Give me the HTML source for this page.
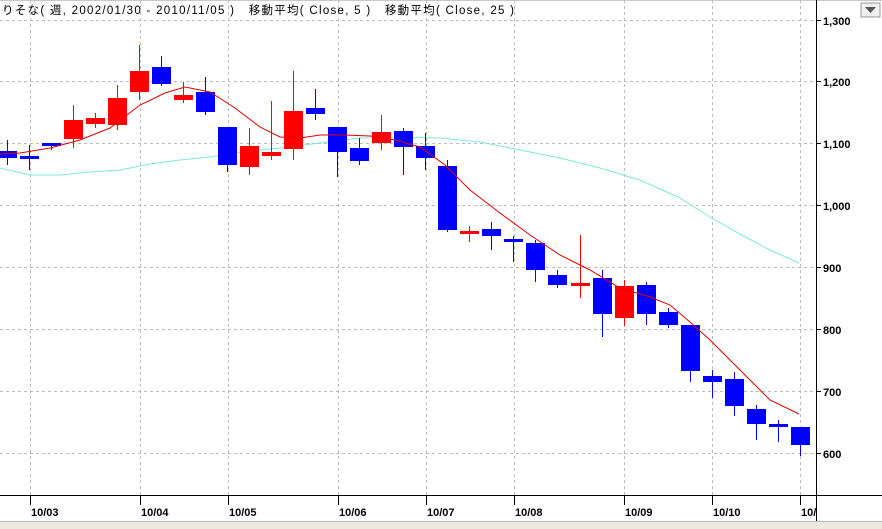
<!DOCTYPE html>
<html><head><meta charset="utf-8"><style>
html,body{margin:0;padding:0;background:#fff;width:882px;height:529px;overflow:hidden}
svg text{font-family:"Liberation Sans","Noto Sans CJK JP",sans-serif}
</style></head><body>
<svg width="882" height="529" xmlns="http://www.w3.org/2000/svg">
<rect width="882" height="529" fill="#fff"/>
<line x1="0" y1="0.5" x2="882" y2="0.5" stroke="#c8c8c8"/>
<g stroke="#bbb" stroke-dasharray="3,3" stroke-width="1">
<line x1="0" y1="20.5" x2="816" y2="20.5"/><line x1="0" y1="81.5" x2="816" y2="81.5"/>
<line x1="0" y1="143.5" x2="816" y2="143.5"/><line x1="0" y1="205.5" x2="816" y2="205.5"/>
<line x1="0" y1="267.5" x2="816" y2="267.5"/><line x1="0" y1="329.5" x2="816" y2="329.5"/>
<line x1="0" y1="391.5" x2="816" y2="391.5"/><line x1="0" y1="453.5" x2="816" y2="453.5"/>
<line x1="30.5" y1="0" x2="30.5" y2="495"/><line x1="140.5" y1="0" x2="140.5" y2="495"/>
<line x1="228.5" y1="0" x2="228.5" y2="495"/><line x1="338.5" y1="0" x2="338.5" y2="495"/>
<line x1="426.5" y1="0" x2="426.5" y2="495"/><line x1="514.5" y1="0" x2="514.5" y2="495"/>
<line x1="624.5" y1="0" x2="624.5" y2="495"/><line x1="712.5" y1="0" x2="712.5" y2="495"/>
<line x1="800.5" y1="0" x2="800.5" y2="495"/>
</g>
<polyline fill="none" stroke="#7fe8d8" stroke-width="1" points="0,168 30,175 60,175 90,172 120,170 150,164 180,160 210,157 240,152 280,148 320,143 360,138 400,137 440,138 480,142 520,150 560,158 600,168 640,180 680,198 710,217 740,234 770,250 799,263"/>
<g id="c"></g>
<polyline fill="none" stroke="#e00000" stroke-width="1" points="0,154 20,153 50,148 80,140 110,128 140,105 165,93 185,87 210,92 235,108 260,127 280,137 300,138 320,135 345,135 370,136 395,140 420,147 445,165 470,190 500,213 530,235 560,255 590,270 620,288 650,297 670,305 690,322 710,340 730,360 750,380 770,400 799,414"/>
<line x1="816.5" y1="0" x2="816.5" y2="529" stroke="#000"/>
<line x1="0" y1="495.5" x2="882" y2="495.5" stroke="#000"/>
<g stroke="#000">
<line x1="816" y1="20.5" x2="821" y2="20.5"/><line x1="816" y1="81.5" x2="821" y2="81.5"/>
<line x1="816" y1="143.5" x2="821" y2="143.5"/><line x1="816" y1="205.5" x2="821" y2="205.5"/>
<line x1="816" y1="267.5" x2="821" y2="267.5"/><line x1="816" y1="329.5" x2="821" y2="329.5"/>
<line x1="816" y1="391.5" x2="821" y2="391.5"/><line x1="816" y1="453.5" x2="821" y2="453.5"/>
<line x1="30.5" y1="495" x2="30.5" y2="505"/><line x1="140.5" y1="495" x2="140.5" y2="505"/>
<line x1="228.5" y1="495" x2="228.5" y2="505"/><line x1="338.5" y1="495" x2="338.5" y2="505"/>
<line x1="426.5" y1="495" x2="426.5" y2="505"/><line x1="514.5" y1="495" x2="514.5" y2="505"/>
<line x1="624.5" y1="495" x2="624.5" y2="505"/><line x1="712.5" y1="495" x2="712.5" y2="505"/>
<line x1="800.5" y1="495" x2="800.5" y2="505"/>
</g>
<g font-size="11" font-weight="bold" fill="#000">
<text x="823" y="25">1,300</text><text x="823" y="86">1,200</text><text x="823" y="148">1,100</text>
<text x="823" y="210">1,000</text><text x="823" y="272">900</text><text x="823" y="334">800</text>
<text x="823" y="396">700</text><text x="823" y="458">600</text>
<text x="31" y="516">10/03</text><text x="141" y="516">10/04</text><text x="229" y="516">10/05</text>
<text x="339" y="516">10/06</text><text x="427" y="516">10/07</text><text x="515" y="516">10/08</text>
<text x="625" y="516">10/09</text><text x="713" y="516">10/10</text><text x="801" y="516">10/</text>
</g>
<text x="2" y="14" font-size="11.5" fill="#000" textLength="512" lengthAdjust="spacing" xml:space="preserve">りそな( 週, 2002/01/30 - 2010/11/05 )   移動平均( Close, 5 )   移動平均( Close, 25 )</text>
<rect x="861" y="3" width="19" height="14" fill="#f0f0f0" stroke="#999"/>
<polygon points="865,7 876,7 870.5,13" fill="#555"/>
<rect x="0" y="521" width="882" height="8" fill="#ece9e0"/>
<line x1="0" y1="521.5" x2="882" y2="521.5" stroke="#bbb"/>
</svg>
<script>
var d=[[7,151,158,140,165,'b'],[29,156,159,145,170,'b'],[51,143,145,143,150,'b'],[73,120,139,105,148,'r'],[95,118,124,113,128,'r'],[117,98,125,85,130,'r'],[139,71,92,45,100,'r'],[161,67,84,56,86,'b'],[183,95,100,82,103,'r'],[205,92,112,77,115,'b'],[227,127,165,127,172,'b'],[249,146,167,128,175,'r'],[271,152,156,101,160,'r'],[293,111,149,71,160,'r'],[315,108,114,89,120,'b'],[337,127,152,127,177,'b'],[359,148,161,138,165,'b'],[381,132,143,115,150,'r'],[403,131,147,128,175,'b'],[425,146,158,133,170,'b'],[447,166,230,160,232,'b'],[469,231,234,226,242,'r'],[491,229,236,222,250,'b'],[513,239,241,236,262,'b'],[535,243,270,240,282,'b'],[557,275,285,270,288,'b'],[580,283,286,235,298,'r'],[602,278,314,270,337,'b'],[624,286,318,280,326,'r'],[646,285,314,282,325,'b'],[668,312,325,308,328,'b'],[690,325,371,325,382,'b'],[712,376,382,370,398,'b'],[734,379,406,372,416,'b'],[756,409,424,405,440,'b'],[778,424,427,420,442,'b'],[800,427,445,427,456,'b']];
var g=document.getElementById('c'),s='';
d.forEach(function(c){var col=c[5]=='r'?'#f00':'#00f';
s+='<line x1="'+(c[0]+.5)+'" y1="'+c[3]+'" x2="'+(c[0]+.5)+'" y2="'+c[4]+'" stroke="'+col+'"/>';
s+='<rect x="'+(c[0]-9)+'" y="'+c[1]+'" width="19" height="'+Math.max(3,c[2]-c[1])+'" fill="'+col+'"/>';});
g.innerHTML=s;
</script>
</body></html>
